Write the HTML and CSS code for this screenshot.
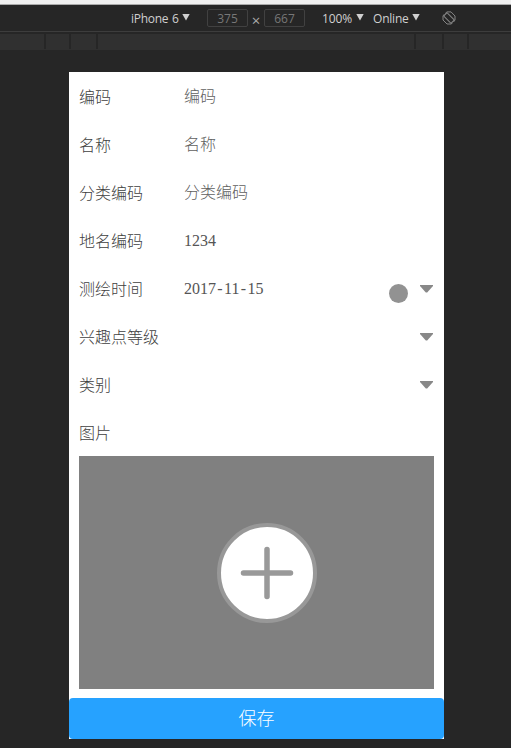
FILE: index.html
```html
<!DOCTYPE html>
<html lang="zh-CN">
<head>
<meta charset="utf-8">
<title>编码</title>
<link rel="stylesheet" href="styles.css">
</head>
<body>
<header class="toolbar">
  <span class="device">iPhone 6</span><i class="caret"></i>
  <span class="size width">375</span><span class="times">×</span><span class="size">667</span>
  <span class="scale">100%</span><i class="caret"></i>
  <span class="network">Online</span><i class="caret"></i>
  <svg class="rotate" width="14" height="14" viewBox="0 0 14 14" fill="none" stroke="#858585" stroke-width="1">
    <path d="M3.2 2.5 5 .9h4L13 5v4l-1.5 2M10.5 12 9 13H5L1 9V5l1.2-1.7"/>
    <rect x="4.6" y="1.8" width="4.8" height="10.4" rx=".6" transform="rotate(-45 7 7)"/>
  </svg>
</header>
<div class="ruler"><i></i><i></i><i></i><i></i><i></i><i></i><i></i></div>
<main class="phone">
  <div class="row"><label>编码</label><span class="value hint">编码</span></div>
  <div class="row"><label>名称</label><span class="value hint">名称</span></div>
  <div class="row"><label>分类编码</label><span class="value hint">分类编码</span></div>
  <div class="row"><label>地名编码</label><span class="value">1234</span></div>
  <div class="row"><label>测绘时间</label><span class="value">2017<b>-</b>11<b>-</b>15</span><i class="touch"></i><svg class="arrow" width="13" height="8" viewBox="0 0 13 8"><path d="M0 0H13V1L7.2 7.6H5.8L0 1Z"/></svg></div>
  <div class="row"><label>兴趣点等级</label><span class="value"></span><svg class="arrow" width="13" height="8" viewBox="0 0 13 8"><path d="M0 0H13V1L7.2 7.6H5.8L0 1Z"/></svg></div>
  <div class="row"><label>类别</label><span class="value"></span><svg class="arrow" width="13" height="8" viewBox="0 0 13 8"><path d="M0 0H13V1L7.2 7.6H5.8L0 1Z"/></svg></div>
  <div class="row"><label>图片</label></div>
  <div class="picture">
    <svg width="100" height="100" viewBox="0 0 100 100">
      <circle cx="50" cy="50" r="48" fill="#fff" stroke="#989898" stroke-width="4"/>
      <path d="M26.5 50h47M50 26.5v47" stroke="#999" stroke-width="5.5" stroke-linecap="round"/>
    </svg>
  </div>
  <button class="save">保存</button>
</main>
</body>
</html>
```
FILE: styles.css
```css
* { box-sizing: border-box; }
body {
  margin: 0;
  height: 748px;
  overflow: hidden;
  background: #262626;
  font-family: "Liberation Serif", "Noto Sans CJK SC", serif;
}
.toolbar {
  display: flex;
  align-items: center;
  height: 32px;
  padding-left: 131px;
  border-top: 4px solid #f0f0f0;
  border-bottom: 1px solid #3d3d3d;
  box-shadow: inset 0 1px #aaa;
  color: #d0d0d0;
  font: 12px/16px "Open Sans", "Noto Sans", sans-serif;
  white-space: nowrap;
}
.toolbar > * { flex: none; }
.device { width: 47px; padding-top: 2px; letter-spacing: -.3px; word-spacing: 1px; }
.caret {
  width: 8px;
  height: 7px;
  margin: 0 0 1px 4px;
  background: #d0d0d0;
  clip-path: polygon(0 0, 100% 0, 50% 100%);
}
.size {
  width: 41px;
  height: 18px;
  border: 1px solid #414141;
  border-radius: 2px;
  color: #777;
  line-height: 18px;
  text-align: center;
}
.size.width { margin-left: 17px; }
.times { width: 16px; padding-top: 4px; color: #aaa; font-size: 15px; text-align: center; }
.scale { width: 30px; margin-left: 17px; padding-top: 2px; letter-spacing: -.1px; }
.network { width: 35px; margin-left: 9px; padding-top: 2px; letter-spacing: -.2px; }
.rotate { margin-left: 22px; }
.ruler {
  display: grid;
  grid-template-columns: 44px 23px 25px 316px 26px 23px 42px;
  column-gap: 2px;
  height: 16px;
  margin-top: 2px;
  border-bottom: 1px solid #303030;
}
.ruler i { background: #303030; }
.phone {
  width: 375px;
  height: 667px;
  margin: 22px 0 0 69px;
  background: #fff;
}
.row {
  display: flex;
  align-items: center;
  height: 48px;
  padding: 0 11px 0 10px;
  color: #404040;
  font-size: 16px;
  line-height: 24px;
  font-weight: 300;
}
.row label { width: 105px; padding-top: 4px; }
.value { flex: 1; padding-top: 2px; color: #555; }
.value.hint { color: #606060; }
.value b { display: inline-block; width: 8px; text-align: center; font-weight: 400; }
.touch {
  width: 19px;
  height: 19px;
  margin: 11px 12px 0 0;
  border-radius: 50%;
  background: #929292;
}
.arrow { fill: #888; margin-top: 2px; }
.picture {
  display: flex;
  align-items: center;
  justify-content: center;
  height: 233px;
  margin: 0 10px 9px;
  padding-left: 21px;
  background: #808080;
}
.save {
  display: block;
  width: 375px;
  height: 41px;
  padding: 0 0 3px;
  border: 0;
  border-radius: 4px;
  background: #26a2ff;
  color: #fff;
  font: 300 18px/38px "Noto Sans CJK SC", sans-serif;
}
```
